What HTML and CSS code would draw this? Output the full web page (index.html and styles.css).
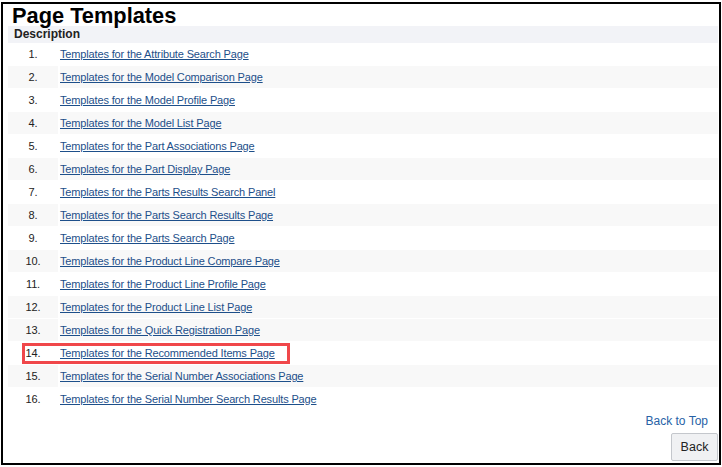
FILE: index.html
```html
<!DOCTYPE html>
<html lang="en">
<head>
    <meta charset="UTF-8">
    <title>Page Templates</title>
    <link rel="stylesheet" href="styles.css">
</head>
<body>
    <div class="frame">
        <h1>Page Templates</h1>
        <table class="templates">
            <tr class="head"><th colspan="2">Description</th></tr>
            <tr><td class="num">1.</td><td><a href="#">Templates for the Attribute Search Page</a></td></tr>
            <tr class="alt"><td class="num">2.</td><td><a href="#">Templates for the Model Comparison Page</a></td></tr>
            <tr><td class="num">3.</td><td><a href="#">Templates for the Model Profile Page</a></td></tr>
            <tr class="alt"><td class="num">4.</td><td><a href="#">Templates for the Model List Page</a></td></tr>
            <tr><td class="num">5.</td><td><a href="#">Templates for the Part Associations Page</a></td></tr>
            <tr class="alt"><td class="num">6.</td><td><a href="#">Templates for the Part Display Page</a></td></tr>
            <tr><td class="num">7.</td><td><a href="#">Templates for the Parts Results Search Panel</a></td></tr>
            <tr class="alt"><td class="num">8.</td><td><a href="#">Templates for the Parts Search Results Page</a></td></tr>
            <tr><td class="num">9.</td><td><a href="#">Templates for the Parts Search Page</a></td></tr>
            <tr class="alt"><td class="num">10.</td><td><a href="#">Templates for the Product Line Compare Page</a></td></tr>
            <tr><td class="num">11.</td><td><a href="#">Templates for the Product Line Profile Page</a></td></tr>
            <tr class="alt"><td class="num">12.</td><td><a href="#">Templates for the Product Line List Page</a></td></tr>
            <tr class="alt"><td class="num">13.</td><td><a href="#">Templates for the Quick Registration Page</a></td></tr>
            <tr class="marked"><td class="num">14.</td><td><a href="#">Templates for the Recommended Items Page</a></td></tr>
            <tr class="alt"><td class="num">15.</td><td><a href="#">Templates for the Serial Number Associations Page</a></td></tr>
            <tr><td class="num">16.</td><td><a href="#">Templates for the Serial Number Search Results Page</a></td></tr>
        </table>
        <div class="top-link"><a href="#">Back to Top</a></div>
        <div class="actions"><button>Back</button></div>
    </div>
</body>
</html>
```

FILE: styles.css
```css
body {
    margin: 0;
    padding: 0;
    font-family: "Liberation Sans", Arial, sans-serif;
    font-size: 12px;
    color: #333;
    background: #fff;
}
.frame {
    position: relative;
    box-sizing: border-box;
    width: 720px;
    height: 463px;
    margin: 2px 0 0 1px;
    border: 2px solid #000;
    padding: 0 0 0 5px;
}
h1 {
    margin: 0;
    padding: 1px 0 0 4px;
    font-size: 21.8px;
    font-weight: bold;
    color: #000;
    line-height: 21px;
}
.templates {
    width: 710px;
    border-collapse: separate;
    border-spacing: 0;
}
.templates th {
    background: #f2f3f7;
    text-align: left;
    font-size: 12px;
    font-weight: bold;
    color: #222;
    height: 17px;
    padding: 0 0 0 6px;
    line-height: 17px;
}
.templates td {
    height: 22px;
    padding: 0;
    line-height: 22px;
    font-size: 11px;
    letter-spacing: -0.15px;
    border-bottom: 1px solid #fff;
}
.templates tr.alt td {
    background: #f8f8f8;
}
.templates td.num {
    width: 50px;
    text-align: center;
    color: #222;
    border-right: 2px solid #fff;
}
.templates td a {
    color: #1d4f8a;
}
.marked .num {
    position: relative;
}
.marked .num::before {
    content: "";
    position: absolute;
    left: 14px;
    top: 1px;
    width: 262px;
    height: 15px;
    border: 3px solid #f0474a;
}
.top-link {
    text-align: right;
    padding: 3px 11px 0 0;
    line-height: 14px;
}
.top-link a {
    color: #2762a6;
    text-decoration: none;
}
.actions {
    text-align: right;
    padding: 5px 1px 0 0;
}
.actions button {
    font-family: "Liberation Sans", Arial, sans-serif;
    font-size: 12.5px;
    color: #222;
    background: #f0f1f3;
    border: 1px solid #c4c7cc;
    border-radius: 2px;
    width: 47px;
    height: 28px;
    padding: 0;
}
```
